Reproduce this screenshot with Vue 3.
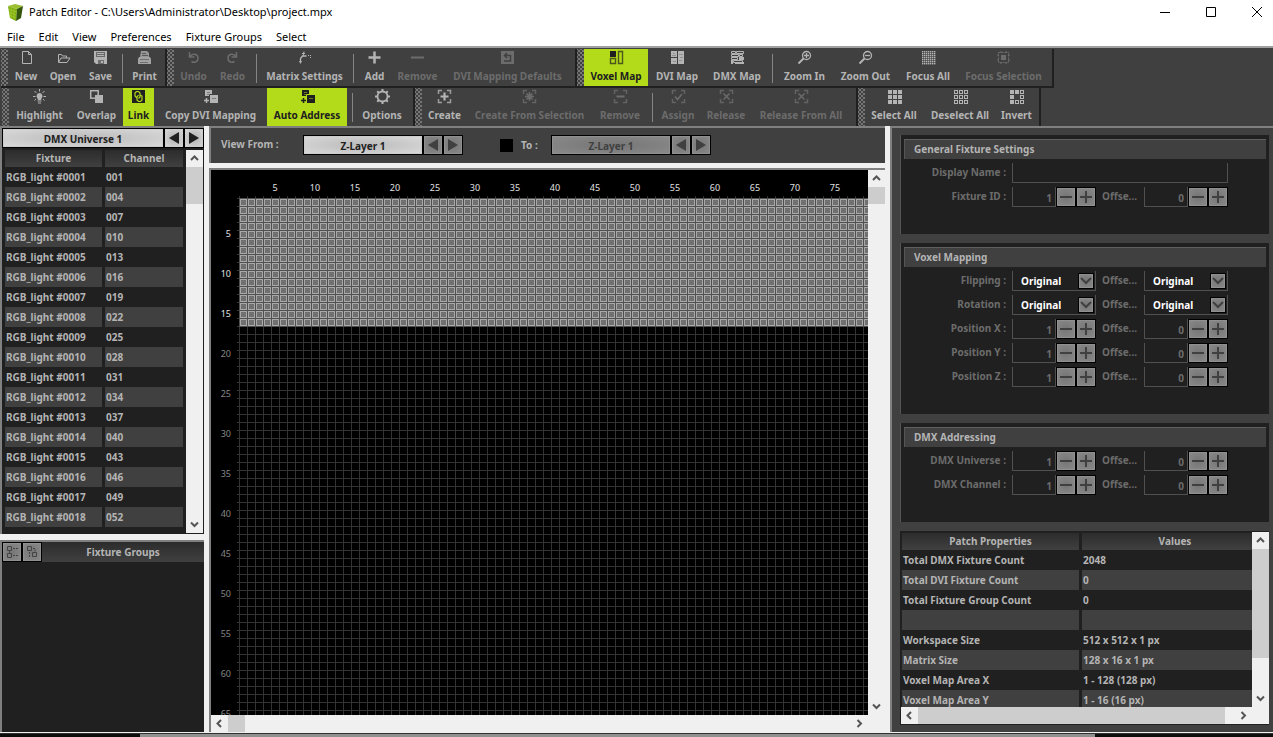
<script setup>
import { ref } from 'vue'

const menus = ['File', 'Edit', 'View', 'Preferences', 'Fixture Groups', 'Select']

const corners = '<path d="M1.5 5V1.5H5M10 1.5h3.500V5M13.500 10v3.500H10M5 13.500H1.500V10" fill="none" stroke="currentColor" stroke-width="1.500" opacity=".8"/>'
const squares = (filled, drawn = [0, 1, 2, 3, 4, 5, 6, 7, 8]) => drawn.map((i) => {
  const x = 1 + (i % 3) * 5
  const y = 1 + Math.floor(i / 3) * 5
  return filled.includes(i)
    ? `<rect x="${x}" y="${y}" width="4" height="4" fill="currentColor"/>`
    : `<rect x="${x + 0.5}" y="${y + 0.5}" width="3" height="3" fill="none" stroke="currentColor"/>`
}).join('')
const dots = () => {
  let out = ''
  for (let i = 0; i < 49; i++) {
    out += `<rect x="${1 + (i % 7) * 2}" y="${1 + Math.floor(i / 7) * 2}" width="1.400" height="1.400" fill="currentColor"/>`
  }
  return out
}
const copyPair = '<rect x="2" y="1" width="7" height="6" fill="currentColor"/><rect x="7" y="6" width="8" height="8" fill="currentColor"/><path d="M4 3.500h3M9 9.500h4M4 5.500h2" stroke="var(--cut)" fill="none" opacity=".5"/><path d="M6.500 7V5.500H9" stroke="var(--cut)" fill="none"/><path d="M3.500 9v5M1 11.500h5" stroke="currentColor" stroke-width="1.500"/>'
const lens = '<circle cx="9.500" cy="5.500" r="4" fill="none" stroke="currentColor" stroke-width="1.300"/><path d="M6.500 8.500L1.500 13.500" stroke="currentColor" stroke-width="2"/>'

const icons = {
  new: '<path d="M3.500 1.500h6l3 3v9h-9z M9.500 1.500v3h3" fill="none" stroke="currentColor"/>',
  open: '<path d="M2.500 12V4.500h3l1 1.500h4v2" fill="none" stroke="currentColor"/><path d="M2.500 12.500l2.500-4.500h9l-3 4.500z" fill="none" stroke="currentColor"/>',
  save: '<path d="M1 1h13v13H3l-2-2z" fill="currentColor"/><path d="M3 2h9v5H3z" fill="var(--cut)" opacity=".65"/><path d="M4 3h7v1H4zM4 5h7v1H4z" fill="currentColor"/><path d="M5 10h6v4H5z" fill="var(--cut)" opacity=".6"/><path d="M8 11h2v2H8z" fill="currentColor"/>',
  print: '<path d="M4 1h6l2 2v4H3z" fill="currentColor" opacity=".75"/><path d="M5 3.500h4M5 5.500h6" stroke="var(--cut)" opacity=".7"/><path d="M2 7h11l1 2v5H1V9z" fill="currentColor" opacity=".85"/><path d="M3 9.500h9M3 12.500h8" stroke="var(--cut)" opacity=".5"/>',
  undo: '<path d="M3.500 2v5h5M4 6.500C6 3 12 3.500 12 8s-4 5-6.500 3.500" fill="none" stroke="currentColor" stroke-width="1.500"/>',
  redo: '<path d="M11.500 2v5h-5M11 6.500C9 3 3 3.500 3 8s4 5 6.500 3.500" fill="none" stroke="currentColor" stroke-width="1.500"/>',
  matrix: '<path d="M3.500 12V8.500L5.500 6h4" fill="none" stroke="currentColor" stroke-width="1.300"/><path d="M6 6.500l1-5M5 3.500h3M11 5.500h1M13 5.500h1M13.500 7v1" stroke="currentColor"/><path d="M2 11l1.500 3L5 11" fill="currentColor"/>',
  add: '<path d="M7.500 1.500v12M1.500 7.500h12" stroke="currentColor" stroke-width="2.500"/>',
  remove: '<path d="M1 7.500h13" stroke="currentColor" stroke-width="2"/>',
  defaults: '<rect x="1" y="1" width="13" height="13" fill="currentColor"/><path d="M7 3L4.500 5.500 7 8M5 5.500h5.500v5.500H4" fill="none" stroke="var(--cut)" stroke-width="1.500"/>',
  voxel: '<rect x="1" y="1" width="6" height="6" fill="#202020"/><path d="M1.500 8.500h5v5h-5zM9.500 1.500h4v12h-4z" fill="none" stroke="currentColor" stroke-width="1.400" opacity=".7"/>',
  dvi: '<path d="M1 1h6v6H1zM1 8h6v6H1zM8 1h6v13H8z" fill="currentColor"/><path d="M3 3.500h2M2 5.500h4M9 4.500h4M10 7.500h3M9 10.500h3M3 11.500h3" stroke="var(--cut)" opacity=".3"/>',
  dmx: '<path d="M1.500 1.500h4v2h-4zM6.500 1.500h7v2h-7zM1.500 4.500h7v2h-7zM9.500 4.500h3v2h-3zM1.500 7.500h6v2h-6zM3.500 10.500h9v2h-9z" fill="none" stroke="currentColor"/><path d="M9 7h5v3H9zM1 10h2v4H1zM5 12h9v2H5z" fill="currentColor"/>',
  zoomin: lens + '<path d="M7 5.500h5M9.500 3v5" stroke="currentColor" stroke-width="1.300"/>',
  zoomout: lens + '<path d="M7 5.500h5" stroke="currentColor" stroke-width="1.300"/>',
  focusall: dots(),
  focussel: '<rect x="2.500" y="2.500" width="10" height="10" fill="none" stroke="currentColor" stroke-dasharray="2 1"/><rect x="5" y="5" width="5" height="5" fill="currentColor"/><path d="M5 1v2M10 1v2M5 12v2M10 12v2M1 5h2M1 10h2M12 5h2M12 10h2" stroke="currentColor"/>',
  highlight: '<path d="M7.500 4a3.200 3.200 0 0 0-2 5.500l.5 1.500h3l.5-1.500a3.200 3.200 0 0 0-2-5.500z" fill="currentColor"/><path d="M5.500 12h4M6 14h3" stroke="currentColor"/><path d="M7.500 0v2.500M2.500 2l2 2M12.500 2l-2 2M1 7.500h2.500M11.500 7.500H14M2.500 11.500l1.500-1.500M12.500 11.500L11 10" stroke="currentColor"/>',
  overlap: '<rect x="1.700" y="1.700" width="7.500" height="7.500" fill="none" stroke="currentColor" stroke-width="1.500"/><rect x="6" y="6" width="8" height="8" fill="currentColor"/>',
  link: '<rect x="1" y="1" width="13" height="13" fill="currentColor"/><path d="M5.500 8.500L4 7V4l1.500-1.500h2L9 4v4L7.500 9.500M9 6l2 1v4l-1.500 1.500h-2L6 11V8l1.500-2" fill="none" stroke="var(--cut)" stroke-width="1.200"/>',
  copy: copyPair,
  options: '<circle cx="7.500" cy="7.500" r="5" fill="none" stroke="currentColor" stroke-width="1.800"/><path d="M7.500 0v2.500M7.500 12.500V15M0 7.500h2.500M12.500 7.500H15M2.200 2.200l1.800 1.800M11 11l1.800 1.800M12.800 2.200L11 4M4 11l-1.800 1.800" stroke="currentColor" stroke-width="2"/>',
  create: corners + '<path d="M7.500 3.500v8M3.500 7.500h8" stroke="currentColor" stroke-width="2.200"/>',
  createfrom: corners + '<path d="M7.500 3v9M3 7.500h9M4.500 4.500l6 6M10.500 4.500l-6 6" stroke="currentColor" stroke-width="1.500"/>',
  unframe: corners + '<path d="M3.500 7.500h8" stroke="currentColor" stroke-width="2"/>',
  assign: corners + '<path d="M4 7.500l2.500 3L11 5" fill="none" stroke="currentColor" stroke-width="1.500"/>',
  release: corners + '<path d="M4.500 4.500l6 6M10.500 4.500l-6 6" stroke="currentColor" stroke-width="1.300"/>',
  all: squares([0, 1, 2, 3, 4, 5, 6, 7, 8]),
  none: squares([]),
  invert: squares([0, 1, 3, 6], [0, 1, 2, 3, 5, 6, 7, 8])
}

const b = (label, icon, w, state = '') => ({ label, icon, w, state })
const sep = (w) => ({ sep: true, w })
const toolbars = [
  [
    [b('New', 'new', 36), b('Open', 'open', 38), b('Save', 'save', 37), sep(7), b('Print', 'print', 37)],
    [b('Undo', 'undo', 39, 'off'), b('Redo', 'redo', 39, 'off'), sep(8), b('Matrix Settings', 'matrix', 89), sep(8), b('Add', 'add', 35), b('Remove', 'remove', 51, 'off'), b('DVI Mapping Defaults', 'defaults', 129, 'off')],
    [b('Voxel Map', 'voxel', 64, 'on'), b('DVI Map', 'dvi', 58), b('DMX Map', 'dmx', 62), sep(9), b('Zoom In', 'zoomin', 55), b('Zoom Out', 'zoomout', 67), b('Focus All', 'focusall', 58), b('Focus Selection', 'focussel', 93, 'off')]
  ],
  [
    [b('Highlight', 'highlight', 61), b('Overlap', 'overlap', 53), b('Link', 'link', 31, 'on'), b('Copy DVI Mapping', 'copy', 113), b('Auto Address', 'copy', 80, 'on'), sep(10), b('Options', 'options', 50)],
    [b('Create', 'create', 45), b('Create From Selection', 'createfrom', 125, 'off'), b('Remove', 'unframe', 56, 'off'), sep(8), b('Assign', 'assign', 44, 'off'), b('Release', 'release', 52, 'off'), b('Release From All', 'release', 98, 'off')],
    [b('Select All', 'all', 58), b('Deselect All', 'none', 74), b('Invert', 'invert', 39)]
  ]
]

const fixtures = Array.from({ length: 18 }, (_, i) => ({
  name: 'RGB_light #' + String(i + 1).padStart(4, '0'),
  channel: String(i * 3 + 1).padStart(3, '0')
}))

const columns = Array.from({ length: 15 }, (_, i) => (i + 1) * 5)
const rows = Array.from({ length: 13 }, (_, i) => (i + 1) * 5)

const panels = [
  { title: 'General Fixture Settings', size: 'small', rows: [{ label: 'Display Name :', kind: 'text' }, { label: 'Fixture ID :', kind: 'spin' }] },
  {
    title: 'Voxel Mapping',
    size: 'large',
    rows: [
      { label: 'Flipping :', kind: 'pick' },
      { label: 'Rotation :', kind: 'pick' },
      { label: 'Position X :', kind: 'spin' },
      { label: 'Position Y :', kind: 'spin' },
      { label: 'Position Z :', kind: 'spin' }
    ]
  },
  { title: 'DMX Addressing', size: 'small', rows: [{ label: 'DMX Universe :', kind: 'spin' }, { label: 'DMX Channel :', kind: 'spin' }] }
]

const properties = [
  ['Total DMX Fixture Count', '2048'],
  ['Total DVI Fixture Count', '0'],
  ['Total Fixture Group Count', '0'],
  ['', ''],
  ['Workspace Size', '512 x 512 x 1 px'],
  ['Matrix Size', '128 x 16 x 1 px'],
  ['Voxel Map Area X', '1 - 128 (128 px)'],
  ['Voxel Map Area Y', '1 - 16 (16 px)']
]

const chevrons = {
  up: 'M5 10l3.500-3.500L12 10',
  down: 'M5 6.500L8.500 10 12 6.500',
  left: 'M10 5L6.500 8.500 10 12',
  right: 'M6.500 5L10 8.500 6.500 12'
}
const showTo = ref(false)
</script>

<template>
  <div class="window">
    <header class="titlebar">
      <svg class="logo" viewBox="0 0 17 17" aria-hidden="true">
        <path d="M1 2l7-2 8 2-6 3z" fill="#9cbf30" />
        <path d="M1 2l9 3-1 12-6-3z" fill="#7cab12" />
        <path d="M16 2l-6 3-1 12 5-3z" fill="#34560c" />
        <path d="M1.500 5l8 3M2 8l7 3M2.500 11l6.500 3M4 3v11M7 4v11" stroke="#a9d02c" stroke-width=".7" />
      </svg>
      <h1>Patch Editor - C:\Users\Administrator\Desktop\project.mpx</h1>
      <div class="caption">
        <button type="button" aria-label="Minimize"><svg viewBox="0 0 12 12"><path d="M1 6.500h10" /></svg></button>
        <button type="button" aria-label="Maximize"><svg viewBox="0 0 12 12"><path d="M1.500 1.500h9v9h-9z" /></svg></button>
        <button type="button" aria-label="Close"><svg viewBox="0 0 12 12"><path d="M1 1l10 10M11 1L1 11" /></svg></button>
      </div>
    </header>

    <nav class="menubar">
      <button v-for="m in menus" :key="m" type="button">{{ m }}</button>
    </nav>

    <div class="toolbars">
      <div v-for="(bar, r) in toolbars" :key="r" class="toolbar">
        <div v-for="(group, g) in bar" :key="g" class="group">
          <span class="grip"></span>
          <template v-for="(item, i) in group" :key="i">
            <span v-if="item.sep" class="sep" :style="{ width: item.w + 'px' }"></span>
            <button v-else type="button" class="tool" :class="item.state" :disabled="item.state === 'off'" :style="{ width: item.w + 'px' }">
              <svg viewBox="0 0 15 15" aria-hidden="true"><g v-html="icons[item.icon]"></g></svg>
              <span>{{ item.label }}</span>
            </button>
          </template>
        </div>
      </div>
    </div>

    <main class="work">
      <aside class="left">
        <section class="universe">
          <div class="switcher">
            <button type="button" class="plate wide">DMX Universe 1</button>
            <button type="button" class="plate" aria-label="Previous universe"><svg viewBox="0 0 16 16"><path d="M13 2v12L3 8z" /></svg></button>
            <button type="button" class="plate" aria-label="Next universe"><svg viewBox="0 0 16 16"><path d="M3 2v12l10-6z" /></svg></button>
          </div>
          <div class="listing">
            <table class="grid fixtures">
              <thead><tr><th>Fixture</th><th>Channel</th></tr></thead>
              <tbody>
                <tr v-for="f in fixtures" :key="f.name"><td>{{ f.name }}</td><td>{{ f.channel }}</td></tr>
              </tbody>
            </table>
            <div class="vbar">
              <button type="button" aria-label="Scroll up"><svg viewBox="0 0 17 17"><path :d="chevrons.up" /></svg></button>
              <i class="thumb t37"></i>
              <button type="button" class="end" aria-label="Scroll down"><svg viewBox="0 0 17 17"><path :d="chevrons.down" /></svg></button>
            </div>
          </div>
        </section>
        <section class="groups">
          <div class="groups-head">
            <button type="button" class="plate dim" aria-label="Add group" disabled>
              <svg viewBox="0 0 18 18"><path d="M4.500 3.500h4v4h-4zM4.500 10.500h4v4h-4zM6.500 8v2" /><path d="M10 5.500h5M10 12.500h5" stroke-dasharray="2 1" /></svg>
            </button>
            <button type="button" class="plate dim" aria-label="Nest group" disabled>
              <svg viewBox="0 0 18 18"><path d="M4.500 3.500h4v4h-4zM9.500 9.500h4v4h-4z" /><path d="M6.500 9v6M10 5.500h2v3" stroke-dasharray="2 1" /></svg>
            </button>
            <h2>Fixture Groups</h2>
          </div>
        </section>
      </aside>

      <section class="center">
        <div class="layers">
          <span class="from">View From :</span>
          <div class="layer-pick">
            <button type="button" class="plate wide">Z-Layer 1</button>
            <button type="button" class="plate dim" aria-label="Previous layer" disabled><svg viewBox="0 0 16 16"><path d="M13 2v12L3 8z" /></svg></button>
            <button type="button" class="plate dim" aria-label="Next layer" disabled><svg viewBox="0 0 16 16"><path d="M3 2v12l10-6z" /></svg></button>
          </div>
          <label class="to"><input v-model="showTo" type="checkbox" />To :</label>
          <div class="layer-pick">
            <button type="button" class="plate wide dim" disabled>Z-Layer 1</button>
            <button type="button" class="plate dim" aria-label="Previous end layer" disabled><svg viewBox="0 0 16 16"><path d="M13 2v12L3 8z" /></svg></button>
            <button type="button" class="plate dim" aria-label="Next end layer" disabled><svg viewBox="0 0 16 16"><path d="M3 2v12l10-6z" /></svg></button>
          </div>
        </div>
        <div class="map">
          <svg class="voxels" role="img" aria-label="Voxel map">
            <defs>
              <pattern id="empty" x="28" y="28" width="8" height="8" patternUnits="userSpaceOnUse">
                <path d="M0 0h8v1H1v7H0z" fill="#333" />
              </pattern>
              <pattern id="lit" x="28" y="28" width="8" height="8" patternUnits="userSpaceOnUse">
                <rect width="8" height="8" fill="#505050" />
                <rect x="1" y="1" width="7" height="7" fill="#a8a8a8" />
                <rect x="2" y="2" width="5" height="5" fill="#707070" />
              </pattern>
            </defs>
            <rect width="100%" height="100%" fill="#000" />
            <rect x="26" y="26" width="100%" height="100%" fill="url(#empty)" />
            <rect x="26" y="26" width="2" height="2" fill="#000" />
            <rect x="28" y="28" width="100%" height="129" fill="url(#lit)" />
            <rect x="28" y="156" width="100%" height="1" fill="#505050" />
            <text v-for="c in columns" :key="c" :x="24 + c * 8" y="21" text-anchor="middle">{{ c }}</text>
            <text v-for="r in rows" :key="'r' + r" x="20" :y="27 + r * 8" text-anchor="end" :class="{ faint: r > 16 }">{{ r }}</text>
          </svg>
          <div class="vbar">
            <button type="button" aria-label="Scroll up"><svg viewBox="0 0 17 17"><path :d="chevrons.up" /></svg></button>
            <i class="thumb t17"></i>
            <button type="button" class="end" aria-label="Scroll down"><svg viewBox="0 0 17 17"><path :d="chevrons.down" /></svg></button>
          </div>
          <div class="hbar">
            <button type="button" aria-label="Scroll left"><svg viewBox="0 0 17 17"><path :d="chevrons.left" /></svg></button>
            <i class="thumb short"></i>
            <button type="button" class="end" aria-label="Scroll right"><svg viewBox="0 0 17 17"><path :d="chevrons.right" /></svg></button>
          </div>
          <span class="corner"></span>
        </div>
      </section>

      <aside class="right">
        <section v-for="p in panels" :key="p.title" class="panel" :class="p.size">
          <h2>{{ p.title }}</h2>
          <div v-for="row in p.rows" :key="row.label" class="field">
            <label :for="row.label">{{ row.label }}</label>
            <input v-if="row.kind === 'text'" :id="row.label" class="full" type="text" disabled />
            <template v-else>
              <div v-if="row.kind === 'spin'" class="spin">
                <input :id="row.label" type="text" value="1" disabled />
                <button type="button" class="plate dim" aria-label="Decrease" disabled><svg viewBox="0 0 16 16"><path d="M2 7h12v2H2z" /></svg></button>
                <button type="button" class="plate dim" aria-label="Increase" disabled><svg viewBox="0 0 16 16"><path d="M2 7h5V2h2v5h5v2H9v5H7V9H2z" /></svg></button>
              </div>
              <div v-else class="pick">
                <select :id="row.label"><option>Original</option></select>
                <span class="plate dim drop"><svg viewBox="0 0 14 14"><path d="M2 4l5 5 5-5" /></svg></span>
              </div>
              <label class="off" :for="row.label + 'offset'">Offse...</label>
              <div v-if="row.kind === 'spin'" class="spin">
                <input :id="row.label + 'offset'" type="text" value="0" disabled />
                <button type="button" class="plate dim" aria-label="Decrease offset" disabled><svg viewBox="0 0 16 16"><path d="M2 7h12v2H2z" /></svg></button>
                <button type="button" class="plate dim" aria-label="Increase offset" disabled><svg viewBox="0 0 16 16"><path d="M2 7h5V2h2v5h5v2H9v5H7V9H2z" /></svg></button>
              </div>
              <div v-else class="pick">
                <select :id="row.label + 'offset'"><option>Original</option></select>
                <span class="plate dim drop"><svg viewBox="0 0 14 14"><path d="M2 4l5 5 5-5" /></svg></span>
              </div>
            </template>
          </div>
        </section>

        <section class="props">
          <div class="clip">
            <table class="grid properties">
              <thead><tr><th>Patch Properties</th><th>Values</th></tr></thead>
              <tbody>
                <tr v-for="p in properties" :key="p[0]"><td>{{ p[0] }}</td><td>{{ p[1] }}</td></tr>
              </tbody>
            </table>
          </div>
          <div class="vbar">
            <button type="button" aria-label="Scroll up"><svg viewBox="0 0 17 17"><path :d="chevrons.up" /></svg></button>
            <i class="thumb long"></i>
            <button type="button" class="end" aria-label="Scroll down"><svg viewBox="0 0 17 17"><path :d="chevrons.down" /></svg></button>
          </div>
          <div class="hbar">
            <button type="button" aria-label="Scroll left"><svg viewBox="0 0 17 17"><path :d="chevrons.left" /></svg></button>
            <i class="thumb fill"></i>
            <button type="button" class="end" aria-label="Scroll right"><svg viewBox="0 0 17 17"><path :d="chevrons.right" /></svg></button>
          </div>
          <span class="corner"></span>
        </section>
      </aside>
    </main>
    <footer class="edge"><i></i></footer>
  </div>
</template>

<style>
body { background: #f0f0f0; overflow: hidden; }
</style>

<style scoped>
* { box-sizing: border-box; }
button, input, select { font: inherit; color: inherit; margin: 0; padding: 0; border: 0; border-radius: 0; background: none; }
h1, h2 { margin: 0; }
svg { display: block; }

.window {
  height: 100vh;
  display: flex;
  flex-direction: column;
  background: #f0f0f0;
  color: #b4b4b4;
  font: bold 10px/20px "Noto Sans", "Open Sans", sans-serif;
  --cut: #404040;
}
.titlebar { display: flex; align-items: center; height: 24px; padding-left: 7px; background: #fff; color: #000; flex: none; }
.logo { width: 17px; height: 17px; }
h1 { flex: 1; margin-left: 5px; font: 11px/24px "Noto Sans", "Open Sans", sans-serif; }
.caption { display: flex; }
.caption button { width: 46px; height: 24px; display: grid; place-items: center; }
.caption button:last-child { width: 39px; padding-left: 7px; }
.caption svg { width: 12px; height: 12px; fill: none; stroke: #000; }
.menubar { display: flex; gap: 14px; height: 22px; padding-left: 7px; background: #fff; flex: none; }
.menubar button { color: #000; font: 11px/26px "Noto Sans", "Open Sans", sans-serif; }

.toolbars { flex: none; background: #404040; border-top: 2px solid #a0a0a0; padding-top: 1px; }
.toolbar { display: flex; height: 39px; padding-left: 1px; }
.toolbar + .toolbar { height: 38px; padding-left: 2px; }
.group { display: flex; padding-right: 2px; border-right: 2px solid #202020; border-bottom: 2px solid #202020; }
.toolbar + .toolbar .group { border-bottom: 0; padding-right: 6px; }
.toolbar + .toolbar .group:last-child { padding-right: 3px; }
.group:nth-child(2) { padding-right: 3px; }
.grip {
  width: 7px;
  background: radial-gradient(#777 35%, transparent 40%) 0 0 / 4px 4px, radial-gradient(#777 35%, transparent 40%) 2px 2px / 4px 4px;
}
.sep { background: linear-gradient(#858585, #858585) 50% 60% / 1px 29px no-repeat; }
.tool { display: flex; flex-direction: column; align-items: center; gap: 1px; padding-top: 1px; white-space: nowrap; }
.tool svg { width: 15px; height: 15px; flex: none; overflow: visible; }
.tool span { line-height: 20px; }
.tool.off { color: #6c6c6c; }
.tool.on { background: #b3db19; color: #202020; --cut: #b3db19; }

.work { flex: 1; min-height: 0; display: flex; gap: 5px; padding-bottom: 1px; }
.left { width: 204px; display: flex; flex-direction: column; gap: 6px; }
.universe, .groups { border: 2px solid #808080; border-right: 0; border-bottom: 0; background: #202020; }
.universe { flex: none; padding-bottom: 1px; }
.groups { flex: 1; }
.switcher, .layer-pick { display: flex; }
.switcher { background: #000; }

.plate {
  width: 20px;
  height: 20px;
  border: 1px solid #000;
  outline: 1px solid #ccc;
  outline-offset: -2px;
  background: radial-gradient(#b4b4b4, #d8d8d8);
  color: #202020;
  display: grid;
  place-items: center;
  flex: none;
}
.plate.wide { background: radial-gradient(#bababa, #dadada); }
.plate.dim { background: radial-gradient(#757575, #8b8b8b); outline-color: #909090; color: #404040; }
.plate svg { width: 16px; height: 16px; fill: currentColor; }
.switcher .wide { flex: 1; }

.grid { border-collapse: separate; border-spacing: 0; table-layout: fixed; line-height: 20px; text-align: left; }
.grid th { height: 17px; padding: 0; line-height: 17px; text-align: center; background: linear-gradient(#2c2c2c, #404040); }
.grid td { height: 20px; padding: 0 0 0 1px; white-space: nowrap; }
.grid th, .grid td { background-clip: padding-box; }
.grid th:first-child, .grid td:first-child { border-right: 3px solid #202020; }
.grid tbody tr:nth-child(even) td { background-color: #404040; }

.listing { display: flex; padding: 2px 1px 0 3px; }
.fixtures { width: 179px; margin-bottom: 6px; }
.fixtures th:first-child { width: 100px; }
.fixtures tr > :last-child { border-right: 1px solid #202020; }

.vbar { display: flex; flex-direction: column; width: 17px; background: #f0f0f0; }
.vbar button, .hbar button { width: 17px; height: 17px; flex: none; }
.vbar svg, .hbar svg { width: 17px; height: 17px; fill: none; stroke: #555; stroke-width: 2; }
.vbar .end { margin-top: auto; }
.thumb { background: #cdcdcd; }
.t37 { height: 37px; }
.t17 { height: 17px; }
.vbar .long { height: 109px; }
.listing .vbar { margin-left: auto; }

.groups-head { display: flex; height: 20px; }
.groups-head h2 { flex: 1; font-size: 10px; line-height: 20px; text-align: center; background: linear-gradient(#2c2c2c, #404040); }
.groups-head .plate svg { width: 18px; height: 18px; fill: none; stroke: #444; }

.center { flex: 1; min-width: 0; display: flex; flex-direction: column; gap: 5px; }
.layers { display: flex; height: 37px; padding: 7px 0 0 10px; background: #404040; border: 2px solid #808080; border-right: 0; border-bottom: 0; flex: none; }
.from { width: 82px; line-height: 18px; }
.layer-pick .wide { width: 120px; }
.to { display: flex; align-items: center; gap: 8px; width: 88px; height: 20px; padding-left: 37px; }
.to input { appearance: none; width: 13px; height: 13px; background: #000; }
.map { flex: 1; min-height: 0; display: grid; grid-template: minmax(0, 1fr) 17px / minmax(0, 1fr) 17px; border: 2px solid #808080; border-right: 0; border-bottom: 0; background: #000; }
.voxels { width: 100%; height: 100%; font: 9px "Noto Sans", "Open Sans", sans-serif; fill: #e0e0e0; }
.voxels .faint { fill: #868686; }
.hbar { display: flex; height: 17px; background: #f0f0f0; }
.hbar .end { margin-left: auto; }
.short { width: 17px; }
.fill { flex: 1; margin-right: 10px; }
.corner { background: #f0f0f0; }

.right { width: 383px; padding: 7px 4px 7px 8px; display: flex; flex-direction: column; gap: 9px; background: #404040; border: 2px solid #808080; border-right: 0; border-bottom: 0; }
.panel { padding: 4px 3px 0 3px; border-left: 1px solid #555; background: #202020; flex: none; }
.panel.small { height: 99px; }
.panel.large { height: 171px; }
.panel h2 { height: 20px; margin-bottom: 4px; padding-left: 9px; border-top: 1px solid #606060; border-left: 1px solid #555; background: #404040; font-size: 10px; line-height: 19px; }
.field { display: grid; grid-template-columns: 102px 84px 36px 84px; column-gap: 6px; height: 24px; color: #6c6c6c; }
.field label { line-height: 18px; text-align: right; white-space: nowrap; }
.field .off { text-align: left; }
.field input { height: 20px; min-width: 0; border: solid #505050; border-width: 0 1px 1px; text-align: right; padding: 2px 3px 0 0; }
.field .full { grid-column: 2 / 5; }
.spin { display: flex; }
.spin input { flex: 1; }
.pick { display: grid; grid-template-columns: 1fr 17px; height: 20px; border: solid #505050; border-width: 0 1px 1px; }
.pick select { grid-area: 1 / 1 / 2 / 3; appearance: none; padding-left: 8px; color: #fff; height: 20px; line-height: 20px; }
.pick .drop { grid-area: 1 / 2; width: 16px; height: 16px; margin-top: 2px; pointer-events: none; }
.pick .drop svg { width: 14px; height: 14px; fill: none; stroke: #404040; stroke-width: 2; }

.props { flex: 1; min-height: 0; display: grid; grid-template: minmax(0, 1fr) 17px / minmax(0, 1fr) 17px; padding: 1px 0 1px 1px; background: #202020; }
.clip { overflow: hidden; padding: 1px 0 0 1px; }
.properties { width: calc(100% + 16px); }
.properties th:first-child { width: 180px; }

.edge { flex: none; height: 4px; background: #0c0c0c; border-top: 1px solid #303030; }
.edge i { display: block; height: 3px; margin: 0 14% 0 11%; background: #909090; }
</style>
